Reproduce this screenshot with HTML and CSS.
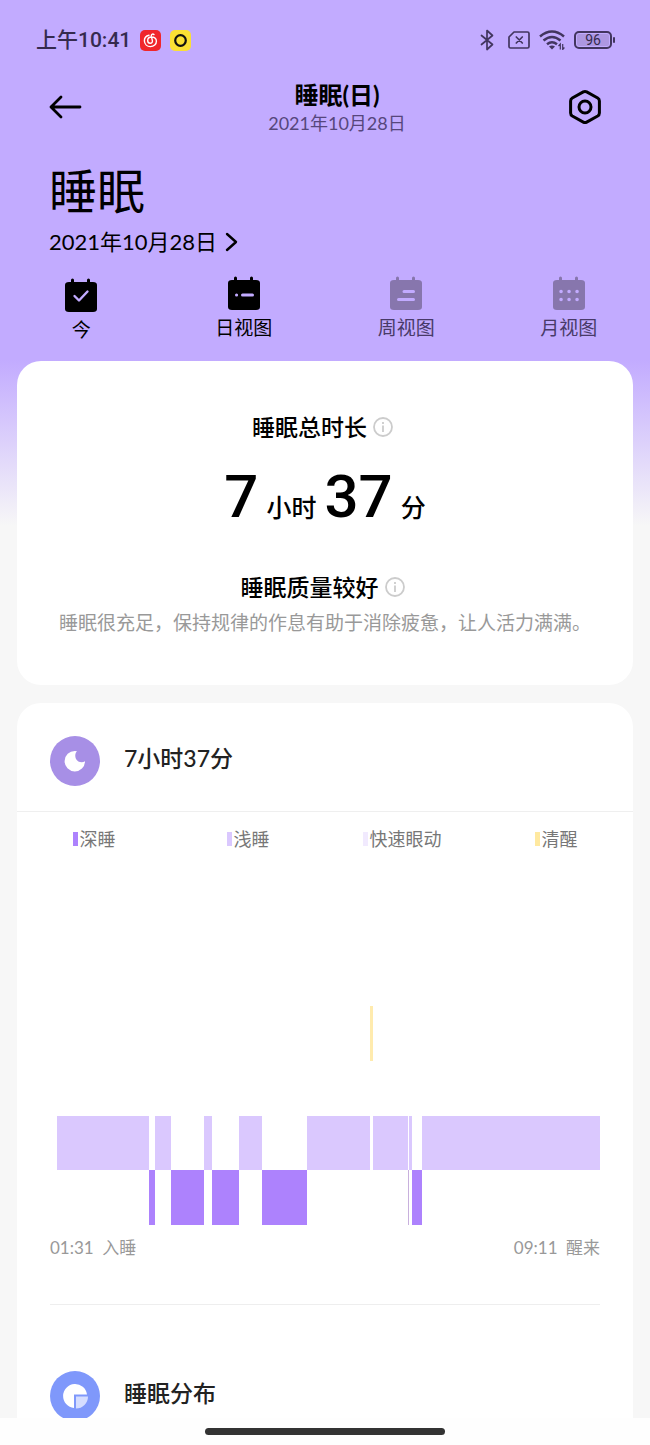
FILE: index.html
```html
<!DOCTYPE html>
<html lang="zh-CN">
<head>
<meta charset="utf-8">
<meta name="viewport" content="width=device-width, initial-scale=1">
<title>睡眠(日)</title>
<link rel="stylesheet" href="styles.css">
</head>
<body>
<div class="screen">
  <div class="scroll">
    <div class="status">
      <div class="status-side">
        <span class="clock">上午10:41</span>
        <svg class="app" viewBox="0 0 21 21" aria-hidden="true"><rect width="21" height="21" rx="5" fill="#f0262b"/><g fill="none" stroke="#fff" stroke-width="1.4" stroke-linecap="round"><path d="M9 5.200C6 5.800 4.300 8.400 4.400 11C4.600 14.200 7.200 16.600 10.400 16.600C13.900 16.600 16.400 14.200 16.400 11.200C16.400 8.600 14.200 7 11.700 7C9.300 7 7.700 8.600 7.700 10.500C7.700 12.200 8.800 13.300 10.200 13.300C11.800 13.300 12.700 12.100 12.400 10.600L11.300 6.200C11 4.300 12.700 3.500 14 4.600"/></g></svg>
        <svg class="app" viewBox="0 0 21 21" aria-hidden="true"><rect width="21" height="21" rx="5" fill="#fbe034"/><circle cx="10.500" cy="10.500" r="5.300" fill="none" stroke="#111" stroke-width="2.200"/></svg>
      </div>
      <div class="status-side">
        <svg width="14" height="22" viewBox="0 0 14 22" fill="none" stroke="#42355f" stroke-width="1.700" stroke-linejoin="round" stroke-linecap="round" aria-hidden="true"><path d="M1.500 6.500L12.500 15.500L7 20.500V1.500L12.500 6.500L1.500 15.500"/></svg>
        <svg class="sim" width="22" height="18" viewBox="0 0 22 18" fill="none" stroke="#42355f" stroke-width="1.700" stroke-linecap="round" stroke-linejoin="round" aria-hidden="true"><path d="M6 1H19.500Q21 1 21 2.500V15.500Q21 17 19.500 17H2.500Q1 17 1 15.500V6Z"/><path d="M8.300 6L14.300 12M14.300 6L8.300 12"/></svg>
        <svg width="26" height="20" viewBox="0 0 26 20" fill="none" stroke="#42355f" stroke-width="2.500" aria-hidden="true"><path d="M1 6.500Q13-3.500 25 6.500M4.500 10.500Q13 3.500 21.500 10.500M8 14.300Q13 10.200 18 14.300"/><path d="M10 16.500Q13 14.500 16 16.500L13 19.500Z" fill="#42355f" stroke="none"/><path d="M21.300 19.500V14L19.500 16M23.700 14V19.500L25.400 17.500" stroke-width="1.200"/></svg>
        <span class="battery"><span class="battery-body">96</span><span class="battery-tip"></span></span>
      </div>
    </div>

    <header class="bar">
      <button class="icon-button" aria-label="返回"><svg width="34" height="24" viewBox="0 0 34 24" fill="none" stroke="#000" stroke-width="2.800" stroke-linecap="round" stroke-linejoin="round"><path d="M32 12H3M13 2L3 12L13 22"/></svg></button>
      <div class="bar-text">
        <h1 class="bar-title">睡眠(日)</h1>
        <p class="bar-date">2021年10月28日</p>
      </div>
      <button class="icon-button" aria-label="设置"><svg width="34" height="36" viewBox="0 0 34 36" fill="none" stroke="#000" stroke-width="3" stroke-linejoin="round"><path d="M15.300 2.900Q17 2 18.700 2.900L29.700 9Q31.400 10 31.400 12V24Q31.400 26 29.700 27L18.700 33.100Q17 34 15.300 33.100L4.300 27Q2.600 26 2.600 24V12Q2.600 10 4.300 9Z"/><circle cx="17" cy="18" r="6"/></svg></button>
    </header>

    <section class="intro">
      <h2 class="intro-title">睡眠</h2>
      <button class="date-button">2021年10月28日<svg width="14" height="20" viewBox="0 0 14 20" fill="none" stroke="#000" stroke-width="2.400" stroke-linecap="round" stroke-linejoin="round" aria-hidden="true"><path d="M3 2L12 10L3 18"/></svg></button>
    </section>

    <nav class="tabs">
      <button class="tab tab-today"><svg width="32" height="34" viewBox="0 0 32 34" aria-hidden="true"><path fill="#000" d="M4 4H6V2Q6 .5 7.500 .5T9 2V4H22V2Q22 .5 23.500 .5T25 2V4H28Q32 4 32 7V31Q32 34 28 34H4Q0 34 0 31V7Q0 4 4 4Z"/><path d="M9.500 18L14 22.500L22.500 13.500" fill="none" stroke="#c2abff" stroke-width="2.400" stroke-linecap="round" stroke-linejoin="round"/></svg>今</button>
      <button class="tab"><svg width="32" height="34" viewBox="0 0 32 34" aria-hidden="true"><path fill="#000" d="M4 4H6V2Q6 .5 7.500 .5T9 2V4H22V2Q22 .5 23.500 .5T25 2V4H28Q32 4 32 7V31Q32 34 28 34H4Q0 34 0 31V7Q0 4 4 4Z"/><path d="M8.500 19H8.600M14.500 19H24.500" stroke="#c2abff" stroke-width="3" stroke-linecap="round"/></svg>日视图</button>
      <button class="tab tab-muted"><svg width="32" height="34" viewBox="0 0 32 34" aria-hidden="true"><path fill="#8776ad" d="M4 4H6V2Q6 .5 7.500 .5T9 2V4H22V2Q22 .5 23.500 .5T25 2V4H28Q32 4 32 7V31Q32 34 28 34H4Q0 34 0 31V7Q0 4 4 4Z"/><path d="M14 15.500H23.500M8.500 23.500H23.500" stroke="#c2abff" stroke-width="3" stroke-linecap="round"/></svg>周视图</button>
      <button class="tab tab-muted"><svg width="32" height="34" viewBox="0 0 32 34" aria-hidden="true"><path fill="#8776ad" d="M4 4H6V2Q6 .5 7.500 .5T9 2V4H22V2Q22 .5 23.500 .5T25 2V4H28Q32 4 32 7V31Q32 34 28 34H4Q0 34 0 31V7Q0 4 4 4Z"/><path d="M8 15.500H8.100M16 15.500H16.100M24 15.500H24.100M8 23.500H8.100M16 23.500H16.100M24 23.500H24.100" stroke="#c2abff" stroke-width="3.500" stroke-linecap="round"/></svg>月视图</button>
    </nav>

    <main class="cards">
      <section class="card summary">
        <h3 class="summary-title">睡眠总时长<svg width="20" height="20" viewBox="0 0 20 20" fill="none" stroke="#ccc" stroke-width="1.800" aria-hidden="true"><circle cx="10" cy="10" r="9"/><path d="M10 8.500V15M10 5V7"/></svg></h3>
        <p class="duration"><b class="number">7</b><span>小时</span><b class="number">37</b><span>分</span></p>
        <h3 class="summary-title">睡眠质量较好<svg width="20" height="20" viewBox="0 0 20 20" fill="none" stroke="#ccc" stroke-width="1.800" aria-hidden="true"><circle cx="10" cy="10" r="9"/><path d="M10 8.500V15M10 5V7"/></svg></h3>
        <p class="advice">睡眠很充足，保持规律的作息有助于消除疲惫，让人活力满满。</p>
      </section>

      <section class="card">
        <div class="row">
          <svg width="50" height="50" viewBox="0 0 50 50" aria-hidden="true"><circle cx="25" cy="25" r="25" fill="#a78fe6"/><path fill="#fff" d="M25 15A10.200 10.200 0 1 0 35 25.300C32 27.500 27.500 26 26 23C24.500 20 25.500 16.500 27 15.300Q26 15 25 15Z"/></svg>
          <h3 class="row-title">7小时37分</h3>
        </div>
        <ul class="legend">
          <li class="key key-deep">深睡</li>
          <li class="key key-light">浅睡</li>
          <li class="key key-rem">快速眼动</li>
          <li class="key key-awake">清醒</li>
        </ul>
        <div class="chart">
          <svg class="plot" viewBox="0 0 1086 438" preserveAspectRatio="none" shape-rendering="crispEdges" role="img" aria-label="睡眠阶段">
            <path class="awake" d="M626 0h6v110h-6z"/>
            <path class="light" d="M0 220h184v108H0zM196 220h32v108h-32zM294 220h16v108h-16zM364 220h46v108h-46zM500 220h126v108H500zM632 220h70v108h-70zM704 220h6v108h-6zM730 220h356v108H730z"/>
            <path class="deep" d="M184 328h12v110h-12zM228 328h66v110h-66zM310 328h54v110h-54zM410 328h90v110h-90zM710 328h20v110h-20z"/>
            <path class="brief" d="M701 328h3v110h-3z"/>
          </svg>
          <div class="times"><span>01:31&ensp;入睡</span><span>09:11&ensp;醒来</span></div>
        </div>
        <div class="row">
          <svg width="50" height="50" viewBox="0 0 50 50" aria-hidden="true"><circle cx="25" cy="25" r="25" fill="#7f98fb"/><path fill="#fff" d="M24 37A12 12 0 1 1 37 23.500H24Z"/><path fill="#d5ddff" d="M26 25.500H38A12 12 0 0 1 26 37.500Z"/></svg>
          <h3 class="row-title">睡眠分布</h3>
        </div>
      </section>
    </main>
  </div>
  <div class="home"><div class="home-pill"></div></div>
</div>
</body>
</html>
```
FILE: styles.css
```css
* { box-sizing: border-box; }
body, h1, h2, h3, p, ul { margin: 0; padding: 0; }
body {
  background: #fefefe;
  color: #000;
  font-family: Lato, "Noto Sans CJK SC", sans-serif;
}
button {
  border: 0;
  padding: 0;
  background: none;
  color: inherit;
  font-family: inherit;
  cursor: pointer;
}
svg { display: block; flex: none; }

.screen { display: flex; flex-direction: column; height: 100vh; }
.scroll {
  flex: 1;
  min-height: 0;
  overflow: hidden;
  background: linear-gradient(#c2abff 0, #c2abff 360px, #f7f7f7 526px);
}
.home { display: flex; justify-content: center; padding: 10px 0; }
.home-pill { width: 240px; height: 7px; border-radius: 4px; background: #333; }

.status {
  display: flex;
  justify-content: space-between;
  align-items: center;
  padding: 28px 35px 0 36px;
  height: 52px;
  color: #352a4e;
}
.status-side { display: flex; align-items: center; gap: 9px; }
.clock { font: 500 21px/24px Roboto, "Noto Sans CJK SC", sans-serif; }
.app { width: 21px; height: 21px; }
.sim { margin-left: 5px; }
.battery { display: flex; align-items: center; gap: 1px; }
.battery-body {
  width: 38px;
  height: 18px;
  border: 2px solid #42355f;
  border-radius: 5px;
  box-shadow: inset 0 0 0 1px #c2abff;
  background: #ad97e2;
  font: 400 14px/14px Roboto, sans-serif;
  text-align: center;
}
.battery-tip { width: 2px; height: 6px; border-radius: 1px; background: #42355f; }

.bar {
  display: flex;
  align-items: center;
  justify-content: space-between;
  padding: 27px 48px 0;
}
.icon-button { display: flex; }
.bar-text { text-align: center; padding-left: 24px; }
.bar-title { font-size: 24px; line-height: 32px; font-weight: 700; }
.bar-date { font-size: 18px; line-height: 24px; color: #56467c; }

.intro { padding: 21px 49px 0; }
.intro-title { font-size: 48px; line-height: 70px; font-weight: 400; }
.date-button {
  display: flex;
  align-items: center;
  gap: 7px;
  font-size: 22px;
  line-height: 32px;
}

.tabs { display: grid; grid-template-columns: repeat(4, 1fr); align-items: start; padding-top: 18px; }
.tab {
  display: flex;
  flex-direction: column;
  align-items: center;
  gap: 4px;
  font-size: 19px;
  line-height: 28px;
}
.tab-today { padding-top: 2px; }
.tab-muted { color: #483a68; }

.cards { display: grid; gap: 18px; padding: 17px 17px 0; }
.card { border-radius: 24px; background: #fff; }

.summary { padding: 50px 32px 46px; text-align: center; }
.summary-title {
  display: flex;
  align-items: center;
  justify-content: center;
  gap: 6px;
  padding-right: 5px;
  font-size: 23px;
  line-height: 32px;
  font-weight: 500;
}
.duration {
  display: flex;
  align-items: flex-end;
  justify-content: center;
  gap: 8px;
  padding: 24px 0 44px;
  font-size: 25px;
  line-height: 40px;
  font-weight: 500;
}
.number { font: 500 60px/60px Roboto, sans-serif; }
.advice { padding-top: 4px; font-size: 19px; line-height: 32px; color: #999; }

.row { display: flex; align-items: center; gap: 24px; padding: 33px 33px 25px; }
.row-title { padding-bottom: 6px; font-size: 23px; line-height: 32px; font-weight: 500; color: #222; }

.legend {
  display: grid;
  grid-template-columns: repeat(4, 1fr);
  padding-top: 14px;
  border-top: 1px solid #efefef;
  list-style: none;
}
.key {
  display: flex;
  align-items: center;
  justify-content: center;
  gap: 2px;
  font-size: 18px;
  line-height: 26px;
  color: #777;
}
.key::before { content: ""; width: 5px; height: 14px; }
.key-deep::before { background: #ad82fd; }
.key-light::before { background: #dac8fe; }
.key-rem::before { background: #f1eafe; }
.key-awake::before { background: #ffe9a0; }

.chart { margin: 0 33px; padding: 154px 0 43px; border-bottom: 1px solid #eee; }
.chart + .row { padding-top: 66px; }
.plot { width: 100%; height: 219px; padding-left: 7px; }
.awake { fill: #ffebae; }
.light { fill: #dac8fe; }
.deep { fill: #ad82fd; }
.brief { fill: #c8b0dd; }
.times {
  display: flex;
  justify-content: space-between;
  padding-top: 10px;
  font-size: 17px;
  line-height: 26px;
  color: #999;
}
```
